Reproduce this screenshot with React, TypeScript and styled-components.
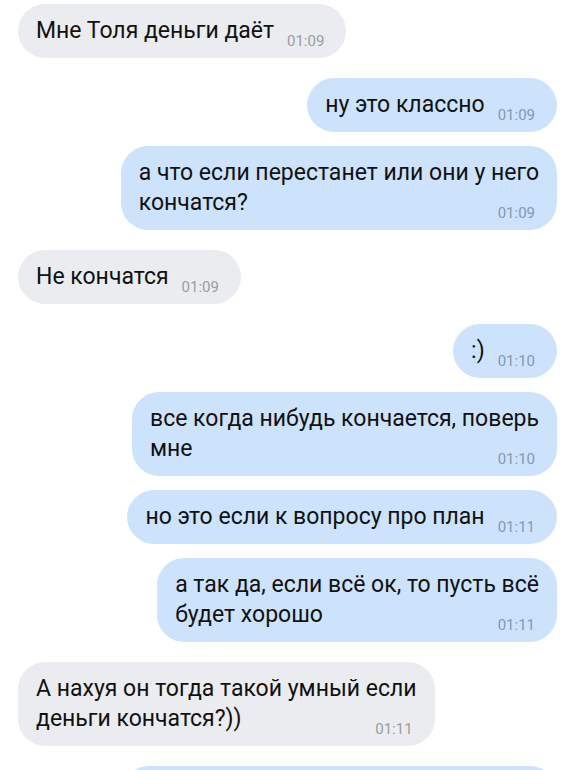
import React from "react";
import styled, { createGlobalStyle } from "styled-components";

type Message = {
  id: number;
  mine: boolean;
  text: string;
  time: string;
};

const messages: Message[] = [
  { id: 1, mine: false, text: "Мне Толя деньги даёт", time: "01:09" },
  { id: 2, mine: true, text: "ну это классно", time: "01:09" },
  {
    id: 3,
    mine: true,
    text: "а что если перестанет или они у него\nкончатся?",
    time: "01:09",
  },
  { id: 4, mine: false, text: "Не кончатся", time: "01:09" },
  { id: 5, mine: true, text: ":)", time: "01:10" },
  {
    id: 6,
    mine: true,
    text: "все когда нибудь кончается, поверь\nмне",
    time: "01:10",
  },
  { id: 7, mine: true, text: "но это если к вопросу про план", time: "01:11" },
  {
    id: 8,
    mine: true,
    text: "а так да, если всё ок, то пусть всё\nбудет хорошо",
    time: "01:11",
  },
  {
    id: 9,
    mine: false,
    text: "А нахуя он тогда такой умный если\nденьги кончатся?))",
    time: "01:11",
  },
];

const GlobalStyle = createGlobalStyle`
  html, body {
    margin: 0;
    padding: 0;
    background: #ffffff;
  }
  body {
    font-family: Roboto, "Noto Sans", "Liberation Sans", sans-serif;
    -webkit-font-smoothing: antialiased;
    overflow: hidden;
  }
`;

const Chat = styled.div`
  display: flex;
  flex-direction: column;
  padding: 4px 19px 0 18px;
`;

const Bubble = styled.div<{ $mine: boolean; $grouped: boolean }>`
  display: flow-root;
  align-self: ${({ $mine }) => ($mine ? "flex-end" : "flex-start")};
  margin-top: ${({ $grouped }) => ($grouped ? "14px" : "20px")};
  padding: 12px 18px;
  border-radius: 27px;
  background: ${({ $mine }) => ($mine ? "#cde3fc" : "#ebecf0")};
  color: #111111;
  font-size: 23px;
  line-height: 30px;
  white-space: pre-line;

  &:first-child {
    margin-top: 0;
  }
`;

/* time sits low in the last line, like the messenger does */
const Time = styled.span<{ $mine: boolean }>`
  float: right;
  margin: 21px 4px 0 13px;
  font-size: 15px;
  line-height: 9px;
  color: ${({ $mine }) => ($mine ? "#8199b1" : "#9a9ca2")};
`;

const Placeholder = styled.div`
  align-self: flex-end;
  width: 435px;
  height: 84px;
  margin-top: 20px;
  border-radius: 27px;
  background: #cde3fc;
`;

export default function App() {
  return (
    <>
      <GlobalStyle />
      <Chat>
        {messages.map((m, i) => (
          <Bubble
            key={m.id}
            $mine={m.mine}
            $grouped={i > 0 && messages[i - 1].mine === m.mine}
          >
            {m.text}
            <Time $mine={m.mine}>{m.time}</Time>
          </Bubble>
        ))}
        <Placeholder />
      </Chat>
    </>
  );
}
